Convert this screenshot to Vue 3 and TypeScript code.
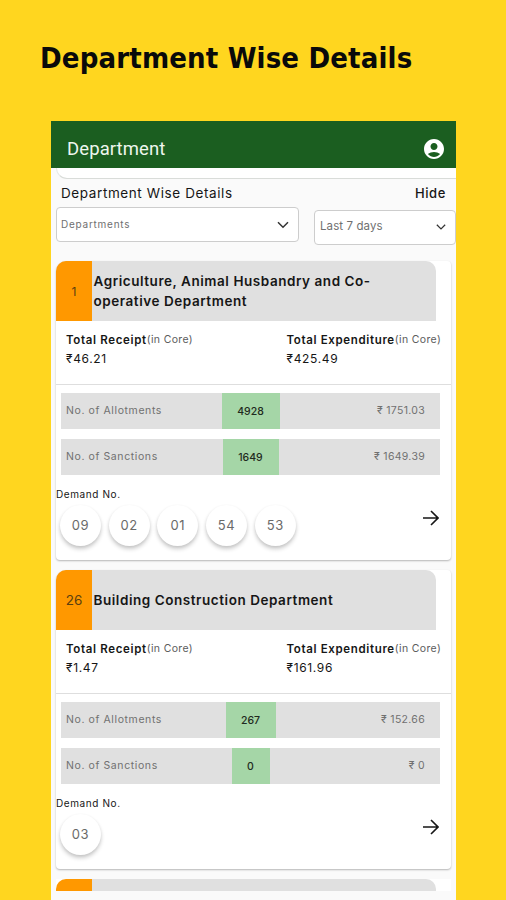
<script setup lang="ts">
interface CountRow {
  label: string
  count: string
  amount: string
  size: string
}

interface Department {
  code: string
  name: string
  receipt: string
  expenditure: string
  rows: CountRow[]
  demands: string[]
}

const departments: Department[] = [
  {
    code: '1',
    name: 'Agriculture, Animal Husbandry and Co-operative Department',
    receipt: '₹46.21',
    expenditure: '₹425.49',
    rows: [
      { label: 'No. of Allotments', count: '4928', amount: '₹ 1751.03', size: 'w-xl' },
      { label: 'No. of Sanctions', count: '1649', amount: '₹ 1649.39', size: 'w-lg' },
    ],
    demands: ['09', '02', '01', '54', '53'],
  },
  {
    code: '26',
    name: 'Building Construction Department',
    receipt: '₹1.47',
    expenditure: '₹161.96',
    rows: [
      { label: 'No. of Allotments', count: '267', amount: '₹ 152.66', size: 'w-md' },
      { label: 'No. of Sanctions', count: '0', amount: '₹ 0', size: 'w-sm' },
    ],
    demands: ['03'],
  },
]
</script>

<template>
  <main class="page">
    <h1 class="title">Department Wise Details</h1>
    <section class="phone">
      <header class="appbar">
        <span class="appbar-title">Department</span>
        <svg class="account" viewBox="2 2 20 20" aria-hidden="true">
          <path
            fill="#fff"
            d="M12 2C6.48 2 2 6.48 2 12s4.48 10 10 10 10-4.48 10-10S17.52 2 12 2zm0 4c1.93 0 3.5 1.57 3.5 3.5S13.93 13 12 13s-3.5-1.57-3.5-3.5S10.07 6 12 6zm0 14c-2.03 0-4.43-.82-6.14-2.88C7.55 15.8 9.68 15 12 15s4.45.8 6.14 2.12C16.43 19.18 14.03 20 12 20z"
          />
        </svg>
      </header>

      <div class="strip"><div class="strip-card"></div></div>

      <div class="section-head">
        <span class="section-title">Department Wise Details</span>
        <span class="hide">Hide</span>
      </div>

      <div class="filters">
        <div class="select select-dept">
          <span class="dept-text">Departments</span>
          <svg class="chevron" viewBox="0 0 12 8"><path d="M1 1.3l5 5 5-5" /></svg>
        </div>
        <div class="select select-days">
          <span class="days-text">Last 7 days</span>
          <svg class="chevron chevron-sm" viewBox="0 0 12 8"><path d="M1 1.3l5 5 5-5" /></svg>
        </div>
      </div>

      <div class="cards">
        <article v-for="d in departments" :key="d.code" class="card">
          <div class="card-head">
            <span class="code" :class="{ tiny: d.code.length === 1 }">{{ d.code }}</span>
            <h2 class="name">{{ d.name }}</h2>
          </div>
          <div class="totals">
            <div class="total">
              <div class="total-label"><b>Total Receipt</b><span>(in Core)</span></div>
              <div class="total-value">{{ d.receipt }}</div>
            </div>
            <div class="total">
              <div class="total-label"><b>Total Expenditure</b><span>(in Core)</span></div>
              <div class="total-value">{{ d.expenditure }}</div>
            </div>
          </div>
          <div class="rows">
            <div v-for="r in d.rows" :key="r.label" class="row">
              <span class="row-label">{{ r.label }}</span>
              <span class="row-count" :class="r.size">{{ r.count }}</span>
              <span class="row-amount">{{ r.amount }}</span>
            </div>
          </div>
          <div class="demand-label">Demand No.</div>
          <div class="demands">
            <span v-for="n in d.demands" :key="n" class="chip">{{ n }}</span>
            <svg class="arrow" viewBox="0 0 16 16"><path d="M0 8h15M8 1l7 7-7 7" /></svg>
          </div>
        </article>
        <div class="peek">
          <div class="peek-code"></div>
          <div class="peek-name"></div>
        </div>
      </div>
    </section>
  </main>
</template>

<style>
body {
  margin: 0;
  background: #ffd61f;
}
</style>

<style scoped>
.page {
  width: 506px;
  height: 900px;
  overflow: hidden;
  background: #ffd61f;
  font-family: Inter, 'Noto Sans', sans-serif;
  color: #161616;
}
.title {
  margin: 0;
  height: 121px;
  padding: 39px 0 0 40px;
  box-sizing: border-box;
  font: bold 29px/38px 'DejaVu Sans Condensed', 'DejaVu Sans', sans-serif;
  font-stretch: condensed;
  letter-spacing: 0.15px;
  color: #0a0a0a;
  white-space: nowrap;
}
.phone {
  width: 405px;
  height: 779px;
  margin-left: 51px;
  background: #fafafa;
  overflow: hidden;
}
.appbar {
  height: 47px;
  padding: 8px 12px 0 16px;
  box-sizing: border-box;
  display: flex;
  align-items: center;
  justify-content: space-between;
  background: #1b5e20;
}
.appbar-title {
  font: 400 18.5px/24px Roboto, sans-serif;
  letter-spacing: 0.1px;
  color: #eef6ee;
}
.account {
  width: 20px;
  height: 20px;
}
.strip {
  height: 11px;
  padding-left: 5px;
  overflow: hidden;
}
.strip-card {
  height: 10px;
  width: 420px;
  border-bottom: 1px solid #d9dcd9;
  border-left: 1px solid #e6e8e6;
  border-radius: 0 0 0 12px;
  background: #fff;
}
.section-head {
  height: 28px;
  padding: 0 10px;
  display: flex;
  justify-content: space-between;
  font-size: 13.5px;
  line-height: 28px;
}
.section-title {
  letter-spacing: 0.6px;
}
.hide {
  font-weight: 500;
  font-size: 13px;
  letter-spacing: 0.6px;
}
.filters {
  height: 54px;
  padding-left: 5px;
  display: flex;
  gap: 15px;
}
.select {
  height: 35px;
  box-sizing: border-box;
  border: 1px solid #cdcdcd;
  border-radius: 4px;
  background: #fff;
  display: flex;
  align-items: center;
  justify-content: space-between;
  color: #707070;
}
.select-dept {
  width: 243px;
  padding: 0 9px 0 4px;
}
.select-days {
  width: 142px;
  margin-top: 3px;
  padding: 0 9px 0 5px;
}
.dept-text {
  font-size: 10px;
  letter-spacing: 0.75px;
  line-height: 16px;
  padding-bottom: 1px;
}
.days-text {
  font-size: 11.5px;
  letter-spacing: 0.1px;
  line-height: 16px;
  padding-bottom: 3px;
}
.chevron {
  width: 12px;
  height: 8px;
  fill: none;
  stroke: #333;
  stroke-width: 1.5;
}
.chevron-sm {
  width: 10px;
  margin-bottom: 1px;
}
.cards {
  padding-left: 5px;
  display: flex;
  flex-direction: column;
  gap: 10px;
}
.card {
  width: 395px;
  height: 299px;
  background: #fff;
  border-radius: 10px 4px 4px 4px;
  box-shadow: 0 1px 2px rgba(0, 0, 0, 0.28);
}
.card-head {
  width: 380px;
  height: 60px;
  display: flex;
  border-radius: 10px 10px 0 0;
  overflow: hidden;
  background: #e0e0e0;
}
.code {
  width: 36px;
  display: flex;
  align-items: center;
  justify-content: center;
  background: #ff9800;
  color: #5a3f10;
  font-size: 13.5px;
}
.code.tiny {
  font-size: 12px;
}
.name {
  flex: 1;
  align-self: center;
  margin: 0;
  padding: 0 40px 0 1.5px;
  font-size: 13.5px;
  font-weight: 600;
  line-height: 20px;
  letter-spacing: 0.55px;
}
.totals {
  height: 64px;
  padding: 9px 0 0 10px;
  box-sizing: border-box;
  display: flex;
  border-bottom: 1px solid #dedede;
}
.total {
  width: 220.5px;
  white-space: nowrap;
}
.total:last-child {
  width: 164px;
}
.total-label {
  display: flex;
  font-size: 11.5px;
  line-height: 20px;
}
.total-label b {
  font-weight: 600;
  letter-spacing: 0.65px;
}
.total-label span {
  font-size: 10.5px;
  letter-spacing: 0.36px;
  color: #5c5c5c;
}
.total-value {
  font-size: 12px;
  line-height: 17px;
  letter-spacing: 0.65px;
}
.rows {
  padding: 8px 0 0 5px;
  display: flex;
  flex-direction: column;
  gap: 10px;
}
.row {
  width: 379px;
  height: 36px;
  display: grid;
  grid-template-columns: 1fr auto 1fr;
  align-items: center;
  background: #e0e0e0;
  font-size: 10.5px;
  line-height: 16px;
  color: #707070;
}
.row-label {
  padding: 0 0 0 5px;
  letter-spacing: 0.6px;
}
.row-count {
  height: 36px;
  line-height: 37px;
  text-align: center;
  background: #a5d6a7;
  color: #1f2a20;
  font-weight: 500;
}
.w-xl {
  width: 58px;
}
.w-lg {
  width: 56px;
}
.w-md {
  width: 50px;
}
.w-sm {
  width: 38px;
}
.row-amount {
  padding: 0 15px 0 0;
  text-align: right;
  letter-spacing: 0.3px;
}
.demand-label {
  margin-top: 10px;
  font-size: 10px;
  line-height: 18px;
  letter-spacing: 0.6px;
}
.demands {
  height: 48px;
  padding: 2px 12px 0 4px;
  display: flex;
  align-items: flex-start;
  gap: 7.7px;
}
.chip {
  width: 41px;
  height: 41px;
  border-radius: 50%;
  background: #fff;
  box-shadow: 0 3px 4px rgba(0, 0, 0, 0.2), 0 1px 3px rgba(0, 0, 0, 0.06);
  text-align: center;
  line-height: 41px;
  font-size: 13px;
  letter-spacing: 0.6px;
  color: #6a6a6a;
}
.arrow {
  width: 16px;
  height: 16px;
  margin: 5px 0 0 auto;
  fill: none;
  stroke: #161616;
  stroke-width: 1.6;
}
.peek {
  width: 395px;
  height: 12px;
  display: flex;
  background: #fff;
  overflow: hidden;
}
.peek-code {
  width: 36px;
  background: #ff9800;
  border-top-left-radius: 10px;
}
.peek-name {
  width: 344px;
  background: #e0e0e0;
  border-top-right-radius: 10px;
}
</style>
